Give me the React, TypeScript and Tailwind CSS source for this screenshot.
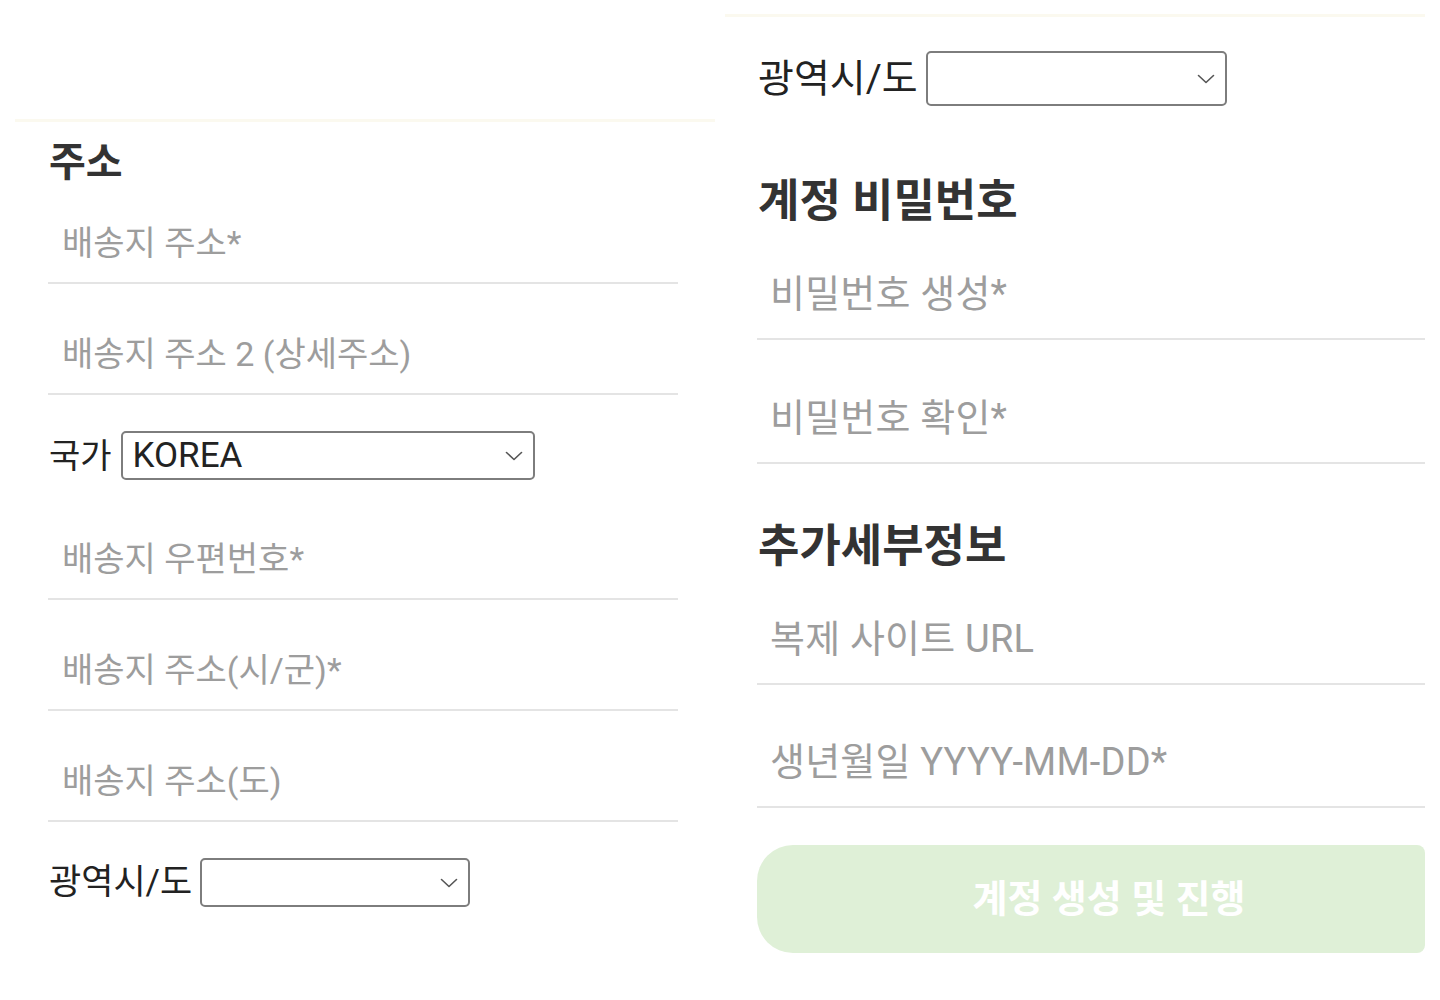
import React from "react";

const Chevron = () => (
  <svg width="18" height="10" viewBox="0 0 18 10" fill="none" className="shrink-0">
    <path d="M1.5 1.5 L9 8.5 L16.5 1.5" stroke="#555" strokeWidth="1.6" strokeLinecap="round" strokeLinejoin="round" />
  </svg>
);

interface SelectProps {
  value?: string;
  className: string;
}

const FakeSelect = ({ value, className }: SelectProps) => (
  <div className={`flex items-center justify-between border-2 border-[#7d7d7d] rounded-[5px] bg-white pl-[10px] pr-[10px] ${className}`}>
    <span className="text-[35px] leading-[36px] text-[#222]">{value}</span>
    <Chevron />
  </div>
);

interface FieldProps {
  label: string;
  className: string;
}

const LeftField = ({ label, className }: FieldProps) => (
  <div className={`flex items-end border-b-2 border-[#e4e4e4] pl-[14px] pb-[22px] ${className}`}>
    <span className="text-[34px] leading-[34px] text-[#9d9d9d]">{label}</span>
  </div>
);

const RightField = ({ label, className }: FieldProps) => (
  <div className={`flex items-end border-b-2 border-[#e4e4e4] pl-[13px] pb-[25px] ${className}`}>
    <span className="text-[38px] leading-[38px] text-[#9d9d9d] tracking-[0.2px]">{label}</span>
  </div>
);

export default function App() {
  return (
    <div className="flex w-[1440px] h-[1000px] bg-white overflow-hidden font-[family-name:Roboto,'Noto_Sans_CJK_KR',sans-serif]">
      {/* left screen */}
      <div className="w-[720px] flex flex-col">
        <div className="h-[119px]" />
        <div className="ml-[15px] mr-[5px] h-[3px] bg-[#fbf9ef]" />
        <div className="flex flex-col pl-[48px] pr-[42px]">
          <h2 className="mt-[20px] pl-[1px] h-[42px] text-[40px] leading-[42px] font-bold text-[#333]">주소</h2>
          <LeftField label="배송지 주소*" className="h-[100px]" />
          <LeftField label="배송지 주소 2 (상세주소)" className="h-[111px]" />
          <div className="mt-[36px] flex items-center gap-[9px] pl-[1px]">
            <span className="text-[34px] leading-[36px] text-[#222]">국가</span>
            <FakeSelect value="KOREA" className="w-[414px] h-[49px]" />
          </div>
          <LeftField label="배송지 우편번호*" className="h-[120px]" />
          <LeftField label="배송지 주소(시/군)*" className="h-[111px]" />
          <LeftField label="배송지 주소(도)" className="h-[111px]" />
          <div className="mt-[36px] flex items-center gap-[8px] pl-[1px]">
            <span className="text-[35px] leading-[36px] text-[#222]">광역시/도</span>
            <FakeSelect className="w-[270px] h-[49px]" />
          </div>
        </div>
      </div>

      {/* right screen */}
      <div className="w-[720px] flex flex-col">
        <div className="mt-[14px] ml-[5px] mr-[15px] h-[3px] bg-[#fbf9ef]" />
        <div className="flex flex-col pl-[37px] pr-[15px]">
          <div className="mt-[34px] flex items-center gap-[8px] pl-[1px]">
            <span className="text-[39px] leading-[40px] text-[#222]">광역시/도</span>
            <FakeSelect className="w-[301px] h-[55px]" />
          </div>
          <h2 className="mt-[72px] pl-[1px] h-[48px] text-[45px] leading-[48px] font-bold text-[#333]">계정 비밀번호</h2>
          <RightField label="비밀번호 생성*" className="h-[114px]" />
          <RightField label="비밀번호 확인*" className="h-[124px]" />
          <h2 className="mt-[59px] pl-[1px] h-[48px] text-[45px] leading-[48px] font-bold text-[#333]">추가세부정보</h2>
          <RightField label="복제 사이트 URL" className="h-[114px]" />
          <RightField label="생년월일 YYYY-MM-DD*" className="h-[123px]" />
          <button className="mt-[37px] h-[108px] w-full rounded-l-[36px] rounded-r-[8px] bg-[#dff0d7] pl-[36px] text-[38px] font-bold text-white">
            계정 생성 및 진행
          </button>
        </div>
      </div>
    </div>
  );
}
